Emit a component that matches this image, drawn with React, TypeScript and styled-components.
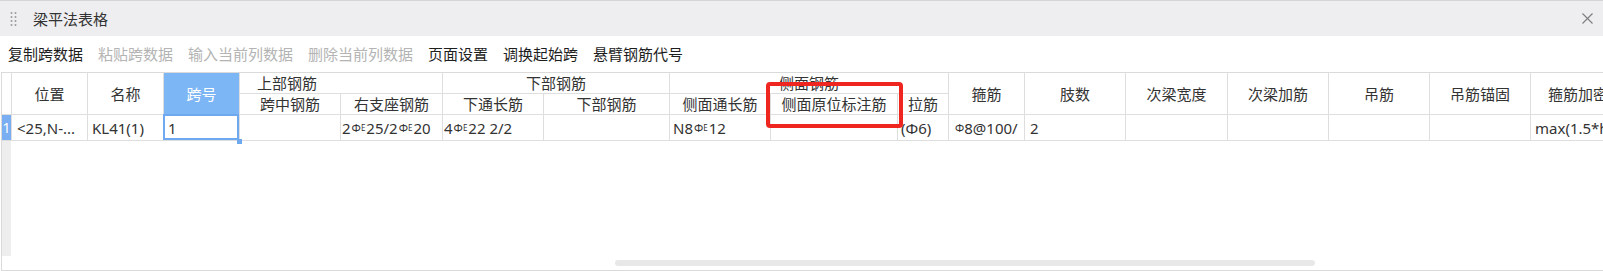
import React from "react";
import styled, { createGlobalStyle } from "styled-components";

const COLS = [10, 76, 76, 76, 101, 102, 101, 126, 101, 127, 51, 76, 101, 102, 101, 101, 101, 140];

const Global = createGlobalStyle`
  html, body { margin: 0; padding: 0; background: #fff; }
  body { font-family: "Noto Sans", "Noto Sans CJK SC", sans-serif; }
`;

const Page = styled.div`
  position: relative;
  width: 1603px;
  height: 271px;
  overflow: hidden;
  background: #fff;
  color: #333;
  font-size: 15px;
  line-height: 20px;
`;

const TitleBar = styled.div`
  height: 36px;
  box-sizing: border-box;
  border-top: 1px solid #d4d4d6;
  background: #eeeef0;
  display: flex;
  align-items: center;
  padding: 0 10px;
`;

const Title = styled.span`
  margin-left: 15px;
  color: #333;
  font-size: 15px;
`;

const CloseButton = styled.span`
  margin-left: auto;
  display: flex;
  align-items: center;
`;

const Toolbar = styled.div`
  height: 36px;
  display: flex;
  align-items: center;
  padding-left: 8px;
  gap: 15px;
`;

const ToolItem = styled.span<{ $disabled?: boolean }>`
  color: ${(p) => (p.$disabled ? "#b4b4b4" : "#1e1e1e")};
  white-space: nowrap;
`;

const Frame = styled.div`
  margin-left: 1px;
  width: 1700px;
  height: 199px;
  box-sizing: border-box;
  border: 1px solid #dadada;
  border-right: none;
  display: flex;
  flex-direction: column;
`;

const Grid = styled.div`
  display: grid;
  grid-template-columns: ${COLS.map((w) => `${w}px`).join(" ")};
  grid-template-rows: 21px 21px 26px 1fr;
  height: 183px;
  flex: none;
`;

type CellProps = {
  $c: number;
  $cs?: number;
  $r: number;
  $rs?: number;
};

const Head = styled.div<CellProps & { $active?: boolean; $indent?: number }>`
  grid-column: ${(p) => p.$c} / span ${(p) => p.$cs ?? 1};
  grid-row: ${(p) => p.$r} / span ${(p) => p.$rs ?? 1};
  box-sizing: border-box;
  border-right: 1px solid #dedede;
  border-bottom: 1px solid #dedede;
  background: ${(p) => (p.$active ? "#7db6f5" : "#fff")};
  color: ${(p) => (p.$active ? "#fff" : "#333")};
  display: flex;
  align-items: center;
  justify-content: ${(p) => (p.$indent != null ? "flex-start" : "center")};
  padding-left: ${(p) => p.$indent ?? 0}px;
  white-space: nowrap;
  overflow: hidden;
`;

const Data = styled.div<CellProps & { $pad?: number; $selected?: boolean }>`
  grid-column: ${(p) => p.$c} / span ${(p) => p.$cs ?? 1};
  grid-row: ${(p) => p.$r} / span ${(p) => p.$rs ?? 1};
  position: relative;
  box-sizing: border-box;
  border-right: 1px solid #dedede;
  border-bottom: 1px solid #dedede;
  display: flex;
  align-items: center;
  padding-left: ${(p) => p.$pad ?? 4}px;
  white-space: nowrap;
  overflow: ${(p) => (p.$selected ? "visible" : "hidden")};
  color: #333;
  z-index: ${(p) => (p.$selected ? 1 : 0)};
`;

const SelectionBox = styled.span`
  position: absolute;
  left: -1px;
  top: -1px;
  right: 0;
  bottom: 0;
  border: 2px solid #6ea9f0;
  pointer-events: none;
`;

const FillHandle = styled.span`
  position: absolute;
  right: -3px;
  bottom: -4px;
  width: 5px;
  height: 5px;
  background: #6ea9f0;
`;

const RowNumber = styled.div<CellProps>`
  grid-column: ${(p) => p.$c};
  grid-row: ${(p) => p.$r};
  box-sizing: border-box;
  border-right: 1px solid #dedede;
  border-bottom: 1px solid #dedede;
  background: #79aef2;
  color: #fff;
  font-size: 14px;
  display: flex;
  align-items: center;
  justify-content: center;
`;

const GutterFill = styled.div`
  grid-column: 1;
  grid-row: 4;
  background: #eeeeee;
  margin-right: 1px;
`;

const Grade = styled.span`
  font-size: 11px;
  line-height: 11px;
  vertical-align: 4px;
  margin-left: 1px;
`;

const GradeE = styled.span`
  font-size: 8px;
  line-height: 8px;
  vertical-align: 7px;
  margin-right: 1px;
`;

const ScrollTrack = styled.div`
  height: 14px;
  padding-top: 4px;
  box-sizing: border-box;
`;

const Thumb = styled.div`
  margin-left: 613px;
  width: 700px;
  height: 6px;
  border-radius: 3px;
  background: #e8e8e8;
`;

const Highlight = styled.div`
  position: absolute;
  left: 766px;
  top: 82px;
  width: 137px;
  height: 46px;
  box-sizing: border-box;
  border: 4px solid #ef2620;
  border-radius: 4px;
  pointer-events: none;
`;

const Bar = ({ e = true }: { e?: boolean }) => (
  <>
    <Grade>Φ</Grade>
    {e && <GradeE>E</GradeE>}
  </>
);

const DragHandle = () => (
  <svg width="8" height="16" viewBox="0 0 8 16">
    {[1, 5, 9, 13].map((y) =>
      [1.5, 5.5].map((x) => <circle key={`${x}-${y}`} cx={x} cy={y + 1} r="1" fill="#9a9a9a" />)
    )}
  </svg>
);

const CloseIcon = () => (
  <svg width="11" height="11" viewBox="0 0 11 11">
    <path d="M0.5 0.5 L10.5 10.5 M10.5 0.5 L0.5 10.5" stroke="#808080" strokeWidth="1.2" fill="none" />
  </svg>
);

const tools: { label: string; disabled?: boolean }[] = [
  { label: "复制跨数据" },
  { label: "粘贴跨数据", disabled: true },
  { label: "输入当前列数据", disabled: true },
  { label: "删除当前列数据", disabled: true },
  { label: "页面设置" },
  { label: "调换起始跨" },
  { label: "悬臂钢筋代号" },
];

const singleHeads: { c: number; label: string; active?: boolean }[] = [
  { c: 2, label: "位置" },
  { c: 3, label: "名称" },
  { c: 4, label: "跨号", active: true },
  { c: 12, label: "箍筋" },
  { c: 13, label: "肢数" },
  { c: 14, label: "次梁宽度" },
  { c: 15, label: "次梁加筋" },
  { c: 16, label: "吊筋" },
  { c: 17, label: "吊筋锚固" },
  { c: 18, label: "箍筋加密区长度" },
];

const subHeads: { c: number; label: string }[] = [
  { c: 5, label: "跨中钢筋" },
  { c: 6, label: "右支座钢筋" },
  { c: 7, label: "下通长筋" },
  { c: 8, label: "下部钢筋" },
  { c: 9, label: "侧面通长筋" },
  { c: 10, label: "侧面原位标注筋" },
  { c: 11, label: "拉筋" },
];

export default function App() {
  return (
    <Page>
      <Global />
      <TitleBar>
        <DragHandle />
        <Title>梁平法表格</Title>
        <CloseButton>
          <CloseIcon />
        </CloseButton>
      </TitleBar>
      <Toolbar>
        {tools.map((t) => (
          <ToolItem key={t.label} $disabled={t.disabled}>
            {t.label}
          </ToolItem>
        ))}
      </Toolbar>
      <Frame>
        <Grid>
          <Head $c={1} $r={1} $rs={2} />
          {singleHeads.map((h) => (
            <Head key={h.label} $c={h.c} $r={1} $rs={2} $active={h.active}>
              {h.label}
            </Head>
          ))}
          <Head $c={5} $cs={2} $r={1} $indent={17}>
            上部钢筋
          </Head>
          <Head $c={7} $cs={2} $r={1}>
            下部钢筋
          </Head>
          <Head $c={9} $cs={3} $r={1}>
            侧面钢筋
          </Head>
          {subHeads.map((h) => (
            <Head key={h.label + h.c} $c={h.c} $r={2}>
              {h.label}
            </Head>
          ))}

          <RowNumber $c={1} $r={3}>1</RowNumber>
          <Data $c={2} $r={3} $pad={5}>&lt;25,N-...</Data>
          <Data $c={3} $r={3}>KL41(1)</Data>
          <Data $c={4} $r={3} $selected>
            1
            <SelectionBox />
            <FillHandle />
          </Data>
          <Data $c={5} $r={3} />
          <Data $c={6} $r={3} $pad={1}>
            2<Bar />25/2<Bar />20
          </Data>
          <Data $c={7} $r={3} $pad={1}>
            4<Bar />22 2/2
          </Data>
          <Data $c={8} $r={3} />
          <Data $c={9} $r={3} $pad={3}>
            N8<Bar />12
          </Data>
          <Data $c={10} $r={3} />
          <Data $c={11} $r={3} $pad={3}>(Φ6)</Data>
          <Data $c={12} $r={3} $pad={5}>
            <Bar e={false} />8@100/
          </Data>
          <Data $c={13} $r={3} $pad={5}>2</Data>
          <Data $c={14} $r={3} />
          <Data $c={15} $r={3} />
          <Data $c={16} $r={3} />
          <Data $c={17} $r={3} />
          <Data $c={18} $r={3}>max(1.5*hb,500)</Data>

          <GutterFill />
        </Grid>
        <ScrollTrack>
          <Thumb />
        </ScrollTrack>
      </Frame>
      <Highlight />
    </Page>
  );
}
